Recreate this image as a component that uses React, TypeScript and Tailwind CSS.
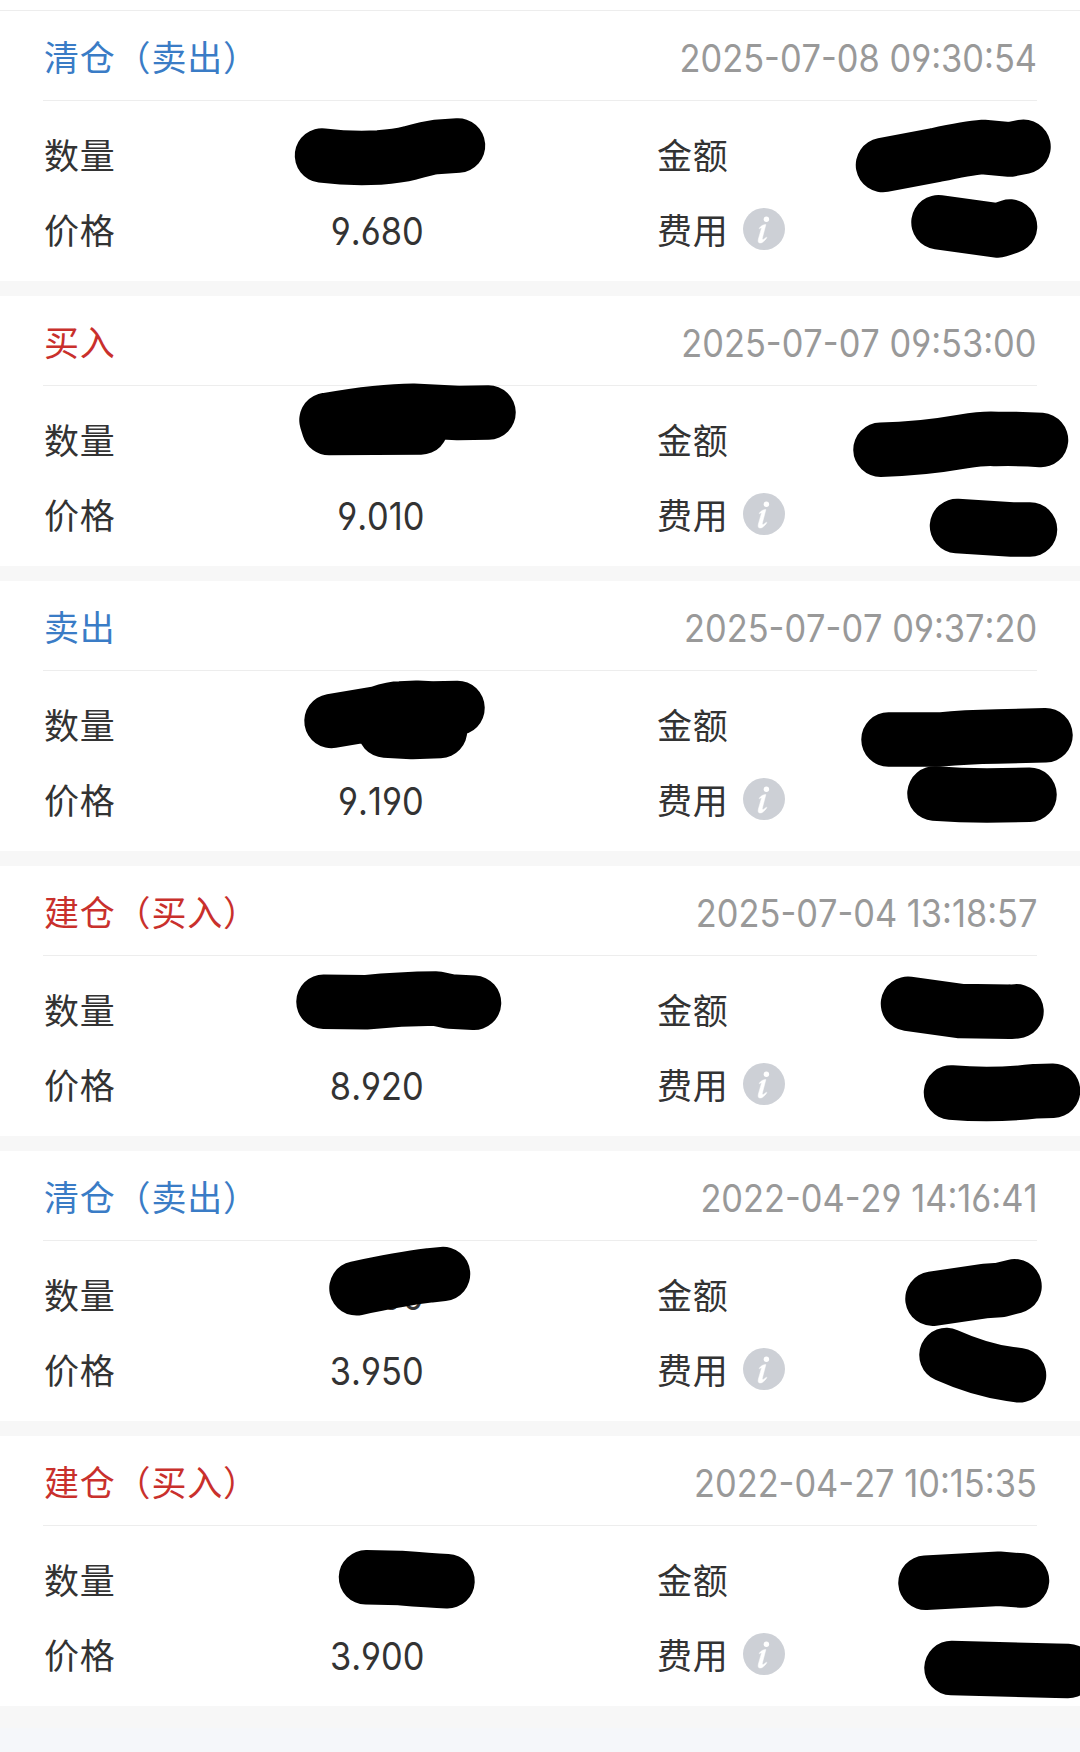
type Side = 'buy' | 'sell';

interface TradeRecord {
  title: string;
  side: Side;
  time: string;
  price: string;
  quantity?: string;
}

const records: TradeRecord[] = [
  { title: '清仓（卖出）', side: 'sell', time: '2025-07-08 09:30:54', price: '9.680' },
  { title: '买入', side: 'buy', time: '2025-07-07 09:53:00', price: '9.010' },
  { title: '卖出', side: 'sell', time: '2025-07-07 09:37:20', price: '9.190' },
  { title: '建仓（买入）', side: 'buy', time: '2025-07-04 13:18:57', price: '8.920' },
  { title: '清仓（卖出）', side: 'sell', time: '2022-04-29 14:16:41', price: '3.950', quantity: '00' },
  { title: '建仓（买入）', side: 'buy', time: '2022-04-27 10:15:35', price: '3.900' },
];

// marker strokes that cover the private amounts
const strokes = [
  'M322 155.5Q350 159 379 157.5Q398 156 410 153Q428 148 436 147L458 145.5',
  'M883 165L936 155Q968 148 983 147L1010 149.5L1023.5 146.7',
  'M938.5 222.3L998 230.5L1010 226.5',
  'M326.5 420Q380 411 413 410.8L458 413L488.5 412.5M326.5 420L329 428L421 427.5',
  'M880.5 449.7Q920 449 963 441.5Q985 438 996 439Q1020 438.5 1041 440',
  'M957 526L1012 529.5L1030 529.5',
  'M331.5 721L379 713Q392 708.5 400 708.5L417 707.8L432 708.5L457.5 708M385 730.5L412 732L440 731',
  'M888.5 739.5H940Q965 737 997 736.5L1045.5 735.3',
  'M934.5 793.5Q960 795.5 987 795.5L1029.5 794.7',
  'M323.5 1001.8L365 1002.3Q400 998.8 436 998.5L450 1001.5L474 1002.8',
  'M908 1003.8Q935 1007.5 960 1011L1010 1011.8L1016.5 1011.3',
  'M951 1092.5Q993 1096 1036 1091.2L1053 1090.7',
  'M356.5 1288.3Q400 1279 430 1275.3L443 1274',
  'M932.5 1298.7L985 1291L1000 1290L1014.5 1286.3',
  'M946.5 1355Q980 1370 1010 1374L1019 1375.3',
  'M366 1577.3L400 1578Q430 1580.5 447.5 1581.2',
  'M925.5 1582.8L999 1578.8L1022 1580.5',
  'M951.5 1668L1056 1670.7L1068 1671',
];

function Digits({ children }: { children?: string }) {
  return (
    <span className="inline-block origin-right scale-x-[0.905] whitespace-pre font-['Inter',sans-serif] text-[38px] leading-[44px] [font-feature-settings:'cv03','cv04','case'] [font-kerning:none]">
      {children}
    </span>
  );
}

function InfoIcon() {
  return (
    <svg viewBox="0 0 42 42" className="ml-[14px] size-[42px]">
      <circle cx="21" cy="21" r="21" fill="#cdd0d6" />
      <circle cx="23.4" cy="11.3" r="2.7" fill="#fff" />
      <path
        d="M16.2 20.3C18 17.8 20.4 16.6 22.9 16.6L19.3 30.2C18.9 32.2 20.4 32 23.3 29.2L23.8 29.7C21.5 33.4 19 35 17 35C15.2 35 14.9 33.2 15.4 31L18.4 20.4C18.5 19.3 17.9 19.6 16.7 20.7Z"
        fill="#fff"
        stroke="#fff"
        strokeWidth="0.5"
      />
    </svg>
  );
}

function Field({ label, value, info }: { label: string; value?: string; info?: boolean }) {
  return (
    <div className="flex h-[75px] w-[381px] items-center pb-[3px]">
      <span className="pl-px">{label}</span>
      {info && <InfoIcon />}
      <span className="ml-auto pt-[3px] tracking-normal">
        <Digits>{value}</Digits>
      </span>
    </div>
  );
}

function TradeCard({ record }: { record: TradeRecord }) {
  return (
    <section className="h-[270px] bg-white px-[43px]">
      <header className="flex h-[90px] items-center justify-between border-b border-[#ededed] pt-px">
        <h2
          className={
            record.side === 'buy' ? 'pl-px text-[#c9302c]' : 'pl-px text-[#3a7cc6]'
          }
        >
          {record.title}
        </h2>
        <time className="pt-[2px] tracking-normal text-[#999]">
          <Digits>{record.time}</Digits>
        </time>
      </header>
      <div className="flex flex-wrap justify-between pt-[17px]">
        <Field label="数量" value={record.quantity} />
        <Field label="金额" />
        <Field label="价格" value={record.price} />
        <Field label="费用" info />
      </div>
    </section>
  );
}

export default function App() {
  return (
    <main className="relative flex h-[1752px] w-[1080px] flex-col overflow-hidden bg-[#f7f7f7] font-['Noto_Sans_CJK_SC',sans-serif] text-[35px] leading-[44px] tracking-[0.8px] text-[#333]">
      <div className="h-[11px] shrink-0 border-b border-[#ededed] bg-white" />
      <div className="flex flex-col gap-[15px]">
        {records.map((record) => (
          <TradeCard key={record.time} record={record} />
        ))}
      </div>
      <div className="mt-[22px] flex-1 bg-[#f5f7fa]" />

      <svg
        viewBox="0 0 1080 1752"
        className="pointer-events-none absolute inset-0 h-full w-full"
        fill="none"
        stroke="#000"
        strokeWidth="54.5"
        strokeLinecap="round"
        strokeLinejoin="round"
      >
        {strokes.map((d) => (
          <path key={d} d={d} />
        ))}
      </svg>
    </main>
  );
}
